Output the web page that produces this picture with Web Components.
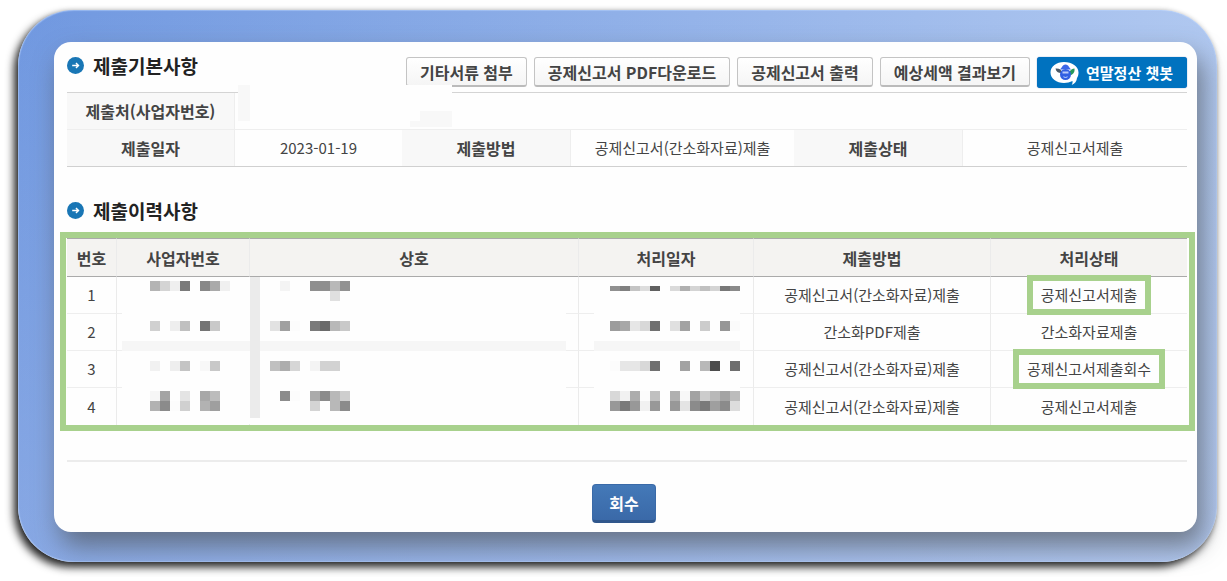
<!DOCTYPE html>
<html lang="ko">
<head>
<meta charset="utf-8">
<meta name="viewport" content="width=device-width, initial-scale=1">
<title>제출내역</title>
<style>
    body {
        margin: 0;
        background: #fff;
        color: #444;
        font-family: "Noto Sans CJK KR", "Liberation Sans", sans-serif;
        font-size: 15px;
    }
</style>
</head>
<body>
<page-frame>
    <section-header heading="제출기본사항">
        <tool-button>기타서류 첨부</tool-button>
        <tool-button>공제신고서 PDF다운로드</tool-button>
        <tool-button>공제신고서 출력</tool-button>
        <tool-button>예상세액 결과보기</tool-button>
        <chatbot-button>연말정산 챗봇</chatbot-button>
    </section-header>
    <basic-info></basic-info>
    <section-header class="second" heading="제출이력사항"></section-header>
    <history-table></history-table>
    <form-actions>회수</form-actions>
</page-frame>

<script>
class PageFrame extends HTMLElement {
    constructor() {
        super();
        this.attachShadow({ mode: 'open' });
        this.shadowRoot.innerHTML = `
            <style>
                :host {
                    display: block;
                    box-sizing: border-box;
                    margin: 10px 10px 19px 18px;
                    padding: 32px 20px 30px 36px;
                    border-radius: 56px;
                    background:
                        linear-gradient(to bottom, rgba(180, 198, 235, 0), rgba(180, 198, 235, 0.35)),
                        linear-gradient(to right, #7098e0, #b0c8f0);
                    box-shadow:
                        inset 0 0 1px 1px rgba(190, 215, 255, 0.5),
                        -4px 5px 9px rgba(0, 0, 0, 0.85),
                        0 0 4px rgba(0, 0, 0, 0.15);
                }
                main {
                    padding: 15px 10px 9px 13px;
                    border-radius: 17px;
                    background: #fefefe;
                    box-shadow: 6px 14px 26px rgba(75, 80, 85, 0.65);
                }
                ::slotted(.second) {
                    margin-top: 35px;
                }
            </style>
            <main><slot></slot></main>
        `;
    }
}

class SectionHeader extends HTMLElement {
    constructor() {
        super();
        this.attachShadow({ mode: 'open' });
        this.render();
    }

    get heading() {
        return this.getAttribute('heading') || '';
    }

    render() {
        this.shadowRoot.innerHTML = `
            <style>
                :host {
                    display: flex;
                    align-items: flex-start;
                    justify-content: space-between;
                    min-height: 25px;
                    margin-bottom: 4px;
                }
                h2 {
                    display: flex;
                    align-items: center;
                    gap: 9px;
                    margin: 0;
                    color: #222;
                    font-size: 19px;
                    font-weight: 700;
                    line-height: 17px;
                    white-space: nowrap;
                }
                .tools {
                    display: flex;
                    align-items: flex-start;
                    gap: 7px;
                }
            </style>
            <h2>
                <svg width="17" height="17" viewBox="0 0 18 18" aria-hidden="true">
                    <circle cx="9" cy="9" r="9" fill="#1976b5"/>
                    <path d="M5.500 9h6.500M9.500 6.300l2.700 2.700-2.700 2.700" fill="none" stroke="#fff" stroke-width="1.500"/>
                </svg>
                ${this.heading}
            </h2>
            <div class="tools"><slot></slot></div>
        `;
    }
}

class ToolButton extends HTMLElement {
    constructor() {
        super();
        this.attachShadow({ mode: 'open' });
        this.shadowRoot.innerHTML = `
            <style>
                :host { display: block; }
                button {
                    height: 30px;
                    padding: 0 13px;
                    border: 1px solid #c4c4c4;
                    border-bottom: 2px solid #bbb;
                    border-radius: 3px;
                    background: linear-gradient(#fff, #f5f5f5);
                    color: #444;
                    font: inherit;
                    font-size: 16px;
                    font-weight: 700;
                    line-height: 24px;
                    white-space: nowrap;
                    cursor: pointer;
                }
            </style>
            <button type="button"><slot></slot></button>
        `;
    }
}

class ChatbotButton extends HTMLElement {
    constructor() {
        super();
        this.attachShadow({ mode: 'open' });
        this.shadowRoot.innerHTML = `
            <style>
                :host { display: block; }
                button {
                    display: flex;
                    align-items: center;
                    gap: 7px;
                    height: 31px;
                    padding: 0 14px 0 13px;
                    border: 0;
                    border-radius: 3px;
                    background: #0072bf;
                    box-shadow: 0 0 1px #3559a8;
                    color: #fff;
                    font: inherit;
                    font-weight: 700;
                    line-height: 24px;
                    white-space: nowrap;
                    cursor: pointer;
                }
            </style>
            <button type="button">
                <svg width="29" height="24" viewBox="0 0 29 24" aria-hidden="true">
                    <path d="M14 1C6.500 1 .5 5.500 .5 11.500S6.500 22 14 22c3 0 6-.700 8.500-2 .2 1.500 0 2.600-.8 3.900 3.300-1.300 5-3.500 5.300-6.900 1-1.500 1.500-3.500 1.500-5.500C28.500 5.500 22 1 14 1z" fill="#fff"/>
                    <path d="M5.500 7.500c4-.300 6 1 6.500 4.500-3.500.300-6-1.200-6.500-4.500z" fill="#4b5967"/>
                    <path d="M24.500 7.500c.500 4-1.500 6.500-5.500 7-.500-3.500 1.500-6.500 5.500-7z" fill="#26985a"/>
                    <circle cx="15.500" cy="13.500" r="5.500" fill="#315fe2"/>
                    <path d="M10 8.500h11l-2-2.500c-.5-1.500-2-2.500-3.500-2.500S12.500 4.500 12 6z" fill="#3c68e8"/>
                    <path d="M12.500 10.500h6v2h-6z" fill="#b8c9fa"/>
                    <path d="M13.500 15.500c1 1.300 3 1.300 4 0" fill="none" stroke="#a9c0fa" stroke-width="1.200"/>
                </svg>
                <slot></slot>
            </button>
        `;
    }
}

// Pixelated cover for private values. Each block line is
// [x, y, height, shades], shades being grey levels in hex, ".." for none.
class PixelMask extends HTMLElement {
    constructor() {
        super();
        this.attachShadow({ mode: 'open' });
    }

    connectedCallback() {
        this.render();
    }

    render() {
        const mask = MASKS[this.getAttribute('name')];
        const rects = mask.bands.map(([x, y, w, h, g]) =>
            `<rect x="${x}" y="${y}" width="${w}" height="${h}" fill="#${g}${g}${g}"/>`);
        mask.blocks.forEach(([x, y, h, shades]) => {
            shades.split(' ').forEach((g, i) => {
                if (g !== '..') {
                    rects.push(`<rect x="${x + i * 10}" y="${y}" width="10" height="${h}" fill="#${g}${g}${g}"/>`);
                }
            });
        });
        this.shadowRoot.innerHTML = `
            <style>
                :host {
                    display: block;
                    position: absolute;
                    z-index: 1;
                }
                svg { display: block; }
            </style>
            <svg width="${mask.width}" height="${mask.height}" shape-rendering="crispEdges" aria-hidden="true">
                <rect width="100%" height="100%" fill="#fefefe"/>
                ${rects.join('')}
            </svg>
        `;
    }
}

const MASKS = {
    office: {
        width: 214,
        height: 42,
        bands: [[0, 0, 12, 36, 'f8'], [182, 26, 32, 16, 'f8'], [172, 36, 10, 6, 'f8']],
        blocks: []
    },
    company: {
        width: 444,
        height: 147,
        bands: [[0, 64, 444, 10, 'f6'], [128, 0, 10, 141, 'eb']],
        blocks: [
            [28, 4, 10, 'b4 d4 ef 7a .. 88 aa f0'],
            [158, 4, 10, 'f4 .. .. 8f 8f b8 92'],
            [208, 14, 10, 'e0'],
            [28, 44, 10, 'd0 .. ee c0 .. 74 c9'],
            [148, 44, 10, 'e2 a0 fc .. 7a 6a b8 c9'],
            [28, 84, 10, 'f1 .. ee c4 .. f8 c8'],
            [148, 84, 10, 'c0 ad d6 .. f4 d2 d2'],
            [28, 114, 10, 'f6 a4 .. e4 .. a8 bc'],
            [158, 114, 10, '8c fc .. ab 8b b8 ce'],
            [28, 124, 10, 'b2 8b fc d0 .. b2 9f'],
            [188, 124, 10, 'd4 .. b8 8b']
        ]
    },
    date: {
        width: 146,
        height: 147,
        bands: [[0, 64, 146, 10, 'f6']],
        blocks: [
            [16, 9, 5, '90 80 c4 dd 60 .. da b0 d4 c0 d4 78 8a'],
            [16, 44, 10, '9c a8 e6 d8 70 .. e0 a2 .. cc .. 96 fb'],
            [16, 84, 10, 'fc e6 e6 d8 70 .. .. a2 .. b8 4c .. 6e'],
            [16, 114, 10, 'd8 f1 ac fc c0 .. b0 f8 a2 cc b8 a4 bc'],
            [16, 124, 10, '98 7a 98 f1 98 .. 98 e4 8b 7a 9f 8b dd']
        ]
    }
};

class BasicInfo extends HTMLElement {
    constructor() {
        super();
        this.attachShadow({ mode: 'open' });
        this.shadowRoot.innerHTML = `
            <style>
                :host { display: block; }
                table {
                    width: 100%;
                    table-layout: fixed;
                    border-collapse: separate;
                    border-spacing: 0;
                    border-top: 1px solid #d4d4d4;
                    border-bottom: 1px solid #d0d0d0;
                }
                th, td {
                    height: 36px;
                    padding: 0;
                    text-align: center;
                    line-height: 24px;
                    white-space: nowrap;
                }
                th {
                    background: #f8f8f8;
                    border-right: 1px solid #eee;
                    color: #444;
                    font-size: 16px;
                }
                tr:first-child > * { border-bottom: 1px solid #eee; }
                .masked { position: relative; }
                .masked pixel-mask { left: 3px; top: -8px; }
            </style>
            <table>
                <colgroup>
                    <col style="width: 168px"><col style="width: 167px"><col style="width: 169px">
                    <col style="width: 223px"><col style="width: 169px"><col style="width: 224px">
                </colgroup>
                <tbody>
                    <tr>
                        <th scope="row">제출처(사업자번호)</th>
                        <td class="masked" colspan="5"><pixel-mask name="office"></pixel-mask></td>
                    </tr>
                    <tr>
                        <th scope="row">제출일자</th>
                        <td>2023-01-19</td>
                        <th scope="row">제출방법</th>
                        <td>공제신고서(간소화자료)제출</td>
                        <th scope="row">제출상태</th>
                        <td>공제신고서제출</td>
                    </tr>
                </tbody>
            </table>
        `;
    }
}

class HistoryTable extends HTMLElement {
    constructor() {
        super();
        this.attachShadow({ mode: 'open' });
        this.rows = [
            { method: '공제신고서(간소화자료)제출', state: '공제신고서제출', marked: true },
            { method: '간소화PDF제출', state: '간소화자료제출' },
            { method: '공제신고서(간소화자료)제출', state: '공제신고서제출회수', marked: true },
            { method: '공제신고서(간소화자료)제출', state: '공제신고서제출' }
        ];
        this.render();
    }

    renderRow(row, i) {
        // the masks cover all four rows and hang from the first one
        const mask = name => i === 0 ? `<pixel-mask name="${name}"></pixel-mask>` : '';
        return `
            <tr>
                <td>${i + 1}</td>
                <td class="company">${mask('company')}</td>
                <td></td>
                <td class="date">${mask('date')}</td>
                <td>${row.method}</td>
                <td>${row.marked ? `<span class="mark">${row.state}</span>` : row.state}</td>
            </tr>
        `;
    }

    render() {
        this.shadowRoot.innerHTML = `
            <style>
                :host {
                    display: block;
                    margin: 5px -8px 0 -7px;
                    padding: 0 2px 0 1px;
                    border: 6px solid #a8d18d;
                }
                table {
                    width: 100%;
                    table-layout: fixed;
                    border-collapse: separate;
                    border-spacing: 0;
                }
                th, td {
                    box-sizing: border-box;
                    height: 37px;
                    padding: 0;
                    border-right: 1px solid #ebebeb;
                    text-align: center;
                    line-height: 24px;
                    white-space: nowrap;
                }
                th:last-child, td:last-child { border-right: 0; }
                th {
                    height: 39px;
                    border-top: 1px solid #aaa;
                    border-bottom: 1px solid #aaa;
                    background: #f4f3f1;
                    color: #444;
                    font-size: 16px;
                }
                td { border-bottom: 1px solid #eee; }
                tr:last-child td { border-bottom: 0; }
                .company, .date { position: relative; }
                .company pixel-mask { left: 5px; top: 0; }
                .date pixel-mask { left: 15px; top: 0; }
                .mark {
                    display: inline-block;
                    position: relative;
                    padding: 0 8px;
                    background: #fefefe;
                    outline: 6px solid #a8d18d;
                    line-height: 28px;
                }
            </style>
            <table>
                <colgroup>
                    <col style="width: 50px"><col style="width: 133px"><col style="width: 329px">
                    <col style="width: 175px"><col style="width: 237px"><col style="width: 196px">
                </colgroup>
                <thead>
                    <tr>
                        <th scope="col">번호</th>
                        <th scope="col">사업자번호</th>
                        <th scope="col">상호</th>
                        <th scope="col">처리일자</th>
                        <th scope="col">제출방법</th>
                        <th scope="col">처리상태</th>
                    </tr>
                </thead>
                <tbody>${this.rows.map((row, i) => this.renderRow(row, i)).join('')}</tbody>
            </table>
        `;
    }
}

class FormActions extends HTMLElement {
    constructor() {
        super();
        this.attachShadow({ mode: 'open' });
        this.shadowRoot.innerHTML = `
            <style>
                :host {
                    display: flex;
                    justify-content: center;
                    margin-top: 29px;
                    padding-top: 22px;
                    border-top: 2px solid #ececec;
                }
                button {
                    height: 39px;
                    margin-right: 6px;
                    padding: 0 16px;
                    border: 1px solid #3a6aa8;
                    border-bottom: 3px solid #30578c;
                    border-radius: 4px;
                    background: linear-gradient(#4479b8, #3a69a8);
                    color: #fff;
                    font: inherit;
                    font-size: 16px;
                    font-weight: 700;
                    line-height: 24px;
                    cursor: pointer;
                }
            </style>
            <button type="button"><slot></slot></button>
        `;
    }
}

customElements.define('page-frame', PageFrame);
customElements.define('section-header', SectionHeader);
customElements.define('tool-button', ToolButton);
customElements.define('chatbot-button', ChatbotButton);
customElements.define('pixel-mask', PixelMask);
customElements.define('basic-info', BasicInfo);
customElements.define('history-table', HistoryTable);
customElements.define('form-actions', FormActions);
</script>
</body>
</html>
